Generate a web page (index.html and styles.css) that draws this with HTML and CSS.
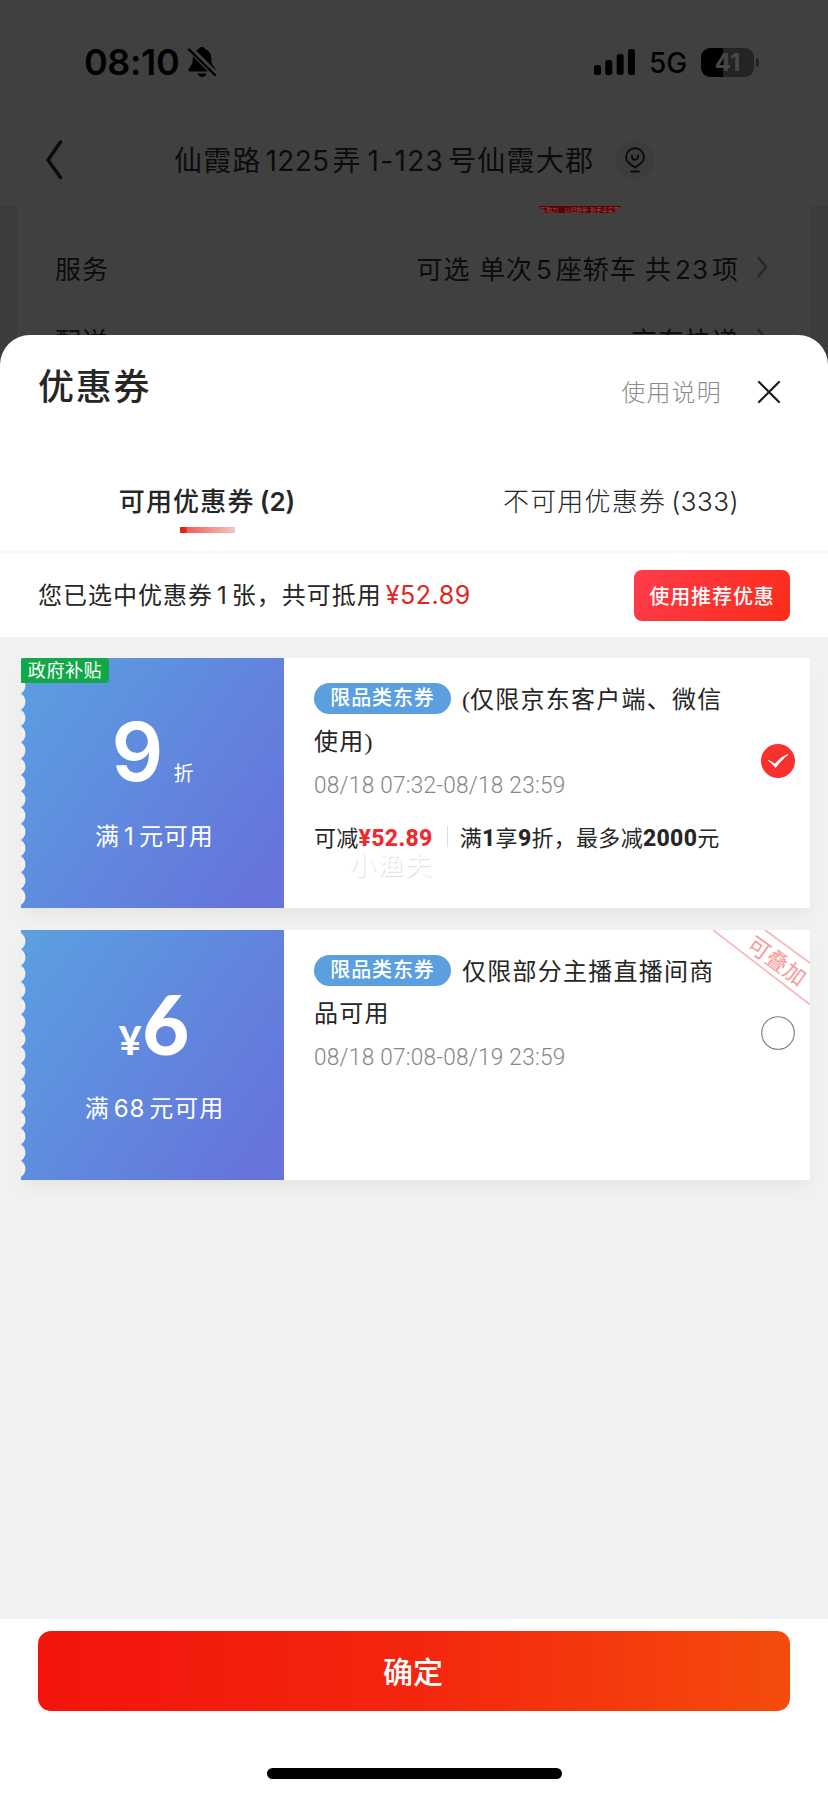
FILE: index.html
```html
<!DOCTYPE html>
<html lang="zh-CN">
<head>
<meta charset="utf-8">
<title>优惠券</title>
<link rel="stylesheet" href="styles.css">
</head>
<body>
<div class="screen">
  <div class="page">
    <header class="status">
      <span class="time">08:10</span>
      <svg class="bell" width="30" height="32" viewBox="0 0 30 32"><path d="M15 1c-1.700 0-2.900.9-3.300 2.300C7.500 4.800 5.900 8 5.800 12.500c-.1 4.500-.9 6.500-3.300 8.900C1 23 1 25.500 4 25.500h22c3 0 3-2.500 1.500-4.100-2.400-2.400-3.200-4.400-3.300-8.900-.1-4.500-1.700-7.700-5.900-9.200C17.900 1.900 16.700 1 15 1zM10.500 27.500h9c-.6 2.200-2.300 3.500-4.500 3.500s-3.900-1.300-4.500-3.500z"/><path d="M1 1l28 28" stroke="#404040" stroke-width="6.500"/><path d="M2 3.500L28 29" stroke="#000" stroke-width="2.400" stroke-linecap="round"/></svg>
      <svg class="signal" width="42" height="26" viewBox="0 0 42 26"><rect y="16" width="7" height="10" rx="2.500"/><rect x="11.300" y="11" width="7" height="15" rx="2.500"/><rect x="22.700" y="5" width="7" height="21" rx="2.500"/><rect x="34" width="7" height="26" rx="2.500"/></svg>
      <span class="net">5G</span>
      <span class="battery"><span class="level">41</span></span>
      <span class="nub"></span>
    </header>
    <nav class="nav">
      <svg class="back" width="18" height="42" viewBox="0 0 18 42"><path d="M15.500 3L3 21l12.500 17.500" fill="none" stroke="#0b0b0b" stroke-width="3.400" stroke-linecap="round" stroke-linejoin="round"/></svg>
      <h1 class="address">仙霞路<span class="n">1225</span>弄<span class="n wide">1-123</span>号仙霞大郡</h1>
      <span class="pin"><svg width="22" height="27" viewBox="0 0 22 27"><g fill="none" stroke="#0c0c0c" stroke-width="1.900" stroke-linecap="round"><path d="M11 20.500C8.500 18.300 2 16 2 10.200a9 9 0 0 1 18 0C20 16 13.500 18.300 11 20.500z"/><path d="M8 8.500v1.300a3 3 0 0 0 6 0V8.500M7 24.500h8"/></g></svg></span>
    </nav>
    <main class="order">
      <div class="promo">东助力　以旧换新 到手享实惠</div>
      <div class="row"><span>服务</span><span class="value">可选 单次<span class="n">5</span>座轿车 共<span class="n">23</span>项</span><svg class="arrow" width="12" height="24" viewBox="0 0 12 24"><path d="M2 2l8 10-8 10" fill="none" stroke="#282828" stroke-width="2.400"/></svg></div>
      <div class="row"><span>配送</span><span class="value">京东快递</span><svg class="arrow" width="12" height="24" viewBox="0 0 12 24"><path d="M2 2l8 10-8 10" fill="none" stroke="#282828" stroke-width="2.400"/></svg></div>
    </main>
  </div>

  <section class="sheet">
    <header class="sheet-head">
      <h2>优惠券</h2>
      <a class="help">使用说明</a>
      <svg width="24" height="24" viewBox="0 0 24 24"><path d="M2 2l20 20M22 2L2 22" stroke="#1c1c1c" stroke-width="2.200" stroke-linecap="round"/></svg>
    </header>
    <div class="tabs">
      <div class="tab active"><span>可用优惠券<span class="count">(2)</span></span></div>
      <div class="tab"><span>不可用优惠券<span class="count">(333)</span></span></div>
    </div>
    <div class="summary">
      <p>您已选中优惠券<span class="one">1</span>张，共可抵用<span class="amount">¥52.89</span></p>
      <button class="recommend">使用推荐优惠</button>
    </div>
    <div class="list">
      <article class="coupon">
        <div class="stub">
          <span class="tag">政府补贴</span>
          <div class="price"><span class="nine">9</span><span class="unit">折</span></div>
          <div class="cond">满<span class="n">1</span>元可用</div>
        </div>
        <div class="info">
          <h3><span class="badge">限品类东券</span><span class="paren">(</span>仅限京东客户端、微信使用<span class="paren">)</span></h3>
          <time>08/18 07:32-08/18 23:59</time>
          <div class="detail"><span>可减<b class="red">¥52.89</b></span><i></i><span>满<b>1</b>享<b>9</b>折，最多减<b>2000</b>元</span></div>
          <span class="watermark">小渔夫</span>
        </div>
        <svg class="check" width="34" height="34" viewBox="0 0 34 34"><circle cx="17" cy="17" r="17" fill="#f8302e"/><path d="M7.500 16.500c2 .8 4.500 2.300 6.500 3.800 3.500-4.500 8-8.300 13-9.800-4.500 3.500-9 8.200-12.500 13-1.500-2.500-4.500-5-7-7z" fill="#fff" stroke="#fff" stroke-width="1" stroke-linejoin="round"/></svg>
      </article>
      <article class="coupon">
        <div class="stub">
          <div class="price"><span class="yen">¥</span><span class="six">6</span></div>
          <div class="cond">满<span class="n">68</span>元可用</div>
        </div>
        <div class="info">
          <h3><span class="badge">限品类东券</span>仅限部分主播直播间商品可用</h3>
          <time>08/18 07:08-08/19 23:59</time>
        </div>
        <svg class="check" width="34" height="34" viewBox="0 0 34 34"><circle cx="17" cy="17" r="16.300" fill="#fff" stroke="#777" stroke-width="1.100"/></svg>
        <div class="ribbon"><svg width="104" height="76" viewBox="0 0 104 76"><path d="M7 0l97 74.500M59 0l45 33" stroke="#f8b4b4" stroke-width="1.600"/></svg><span>可叠加</span></div>
      </article>
    </div>
    <footer class="foot">
      <button class="confirm">确定</button>
      <div class="home"></div>
    </footer>
  </section>
</div>
</body>
</html>
```

FILE: styles.css
```css
* { box-sizing: border-box; margin: 0; }
body { font-family: Inter, "Noto Sans CJK SC", sans-serif; background: #404040; color: #262626; }
button { border: 0; font-family: inherit; padding: 0; color: #fff; font-weight: 500; }
svg { display: block; flex: none; }
.screen { width: 828px; height: 1796px; overflow: hidden; display: flex; flex-direction: column; }

.page { height: 366px; flex: none; background: #404040; color: #0c0c0c; overflow: hidden; }
.status { height: 124px; padding: 0 69px 0 84px; display: flex; align-items: center; color: #000; }
.time { font-size: 36px; font-weight: 600; line-height: 36px; width: 103px; letter-spacing: -.4px; white-space: nowrap; }
.signal { margin: 0 13px 0 auto; }
.net { font-size: 28px; font-weight: 500; width: 40px; line-height: 28px; padding-top: 2px; margin-right: 12px; }
.battery { width: 53px; height: 29px; border-radius: 9px; background: linear-gradient(90deg, #000 22px, #242424 22px); display: flex; align-items: center; justify-content: center; }
.level { color: #484848; font-size: 24px; font-weight: 700; line-height: 28px; padding-top: 2px; }
.nub { width: 3px; height: 9px; margin-left: 2px; border-radius: 0 4px 4px 0; background: #242424; }
.nav { height: 82px; display: flex; align-items: center; padding: 0 0 10px 45px; }
.address { font-size: 28px; font-weight: 400; line-height: 40px; letter-spacing: 1.2px; white-space: nowrap; margin-left: 111px; width: 442px; padding-top: 2px; }
.address .n { margin: 0 3px 0 4px; letter-spacing: .3px; }
.address .wide { margin: 0 4px 0 6px; letter-spacing: 1.3px; }
.pin { width: 38px; height: 38px; border-radius: 50%; background: #3c3c3c; display: flex; align-items: center; justify-content: center; }
.order { margin: 0 17px; height: 160px; background: #404040; box-shadow: -17px 0 #3c3c3c, 17px 0 #3c3c3c; }
.promo { width: 82px; height: 7px; margin-left: 522px; overflow: hidden; background: #5c0205; clip-path: polygon(0 0, 100% 0, 92% 100%, 8% 100%); color: #8b5656; font-size: 6px; line-height: 7px; text-align: center; white-space: nowrap; }
.row { height: 72px; padding: 0 43px 0 38px; display: flex; align-items: center; font-size: 26px; letter-spacing: 1px; }
.promo + .row { margin-top: 18px; }
.value { margin-left: auto; }
.value .n { margin: 0 3px; }
.arrow { margin-left: 17px; }

.sheet { margin-top: -31px; flex: 1; border-radius: 30px 30px 0 0; background: #fff; display: flex; flex-direction: column; position: relative; overflow: hidden; }
.sheet-head { height: 113px; padding: 0 47px 0 38px; display: flex; align-items: center; }
h2 { font-size: 36px; font-weight: 500; letter-spacing: 1.8px; line-height: 40px; margin: -9px auto 0 0; }
.help { color: #8c8c8c; font-size: 24px; font-weight: 300; letter-spacing: 1.2px; margin: -2px 35px 0 0; }
.tabs { height: 105px; padding-top: 34px; display: flex; border-bottom: 2px solid #f7f7f7; }
.tab { flex: 1; display: flex; flex-direction: column; align-items: center; font-size: 26px; line-height: 40px; letter-spacing: 1.2px; font-weight: 300; }
.tab:not(.active) .count { letter-spacing: .5px; }
.tab.active { font-weight: 500; }
.tab.active::after { content: ""; width: 55px; height: 6px; margin-top: 5px; background: linear-gradient(90deg, #e2231a 6px, #ec6058 7px, #f7c4c0); }
.count { margin-left: 5px; letter-spacing: 0; }
.active .count { font-weight: 600; }
.summary { height: 84px; padding: 0 38px; display: flex; align-items: center; justify-content: space-between; font-size: 24px; letter-spacing: 1px; }
.summary p { margin-top: -3px; }
.summary .one { margin: 0 4px 0 4px; }
.amount { color: #e1251b; margin-left: 4px; font-size: 25px; letter-spacing: .55px; }
.recommend { width: 156px; height: 51px; border-radius: 8px; background: linear-gradient(120deg, #ff3b4d, #fa2c19); font-size: 20px; letter-spacing: .9px; }
.list { flex: 1; background: #f1f1f1; padding: 21px 18px 0 21px; display: flex; flex-direction: column; gap: 22px; }
.coupon { height: 250px; background: #fff; display: flex; align-items: center; position: relative; box-shadow: 0 10px 14px -3px rgba(0, 0, 0, .05); }
.stub { position: relative; width: 263px; height: 250px; flex: none; background: linear-gradient(125deg, #5ba0e0, #608ade 45%, #6674dc 90%); color: #fff; display: flex; flex-direction: column; align-items: center; padding-top: 54px; }
.stub::before { content: ""; position: absolute; left: 0; top: 3px; width: 6px; height: 244px; background: radial-gradient(circle at -5px 50%, #f1f1f1 9px, rgba(241, 241, 241, 0) 9.800px) 0 0 / 6px 16.270px; }
.tag { position: absolute; left: 0; top: 0; width: 88px; height: 25px; border-radius: 4px 4px 4px 0; background: #12a84a; font-size: 18px; letter-spacing: .6px; line-height: 25px; text-align: center; }
.price { display: flex; align-items: baseline; height: 96px; line-height: 80px; }
.nine { font-size: 81px; font-weight: 600; }
.unit { font-size: 20px; margin-left: 10px; }
.yen { font: 900 39px Lato, sans-serif; margin-right: 1px; }
.six { font: 900 81px/80px Lato, sans-serif; margin-right: -3px; }
.cond { font-size: 24px; line-height: 58px; letter-spacing: 1px; padding-left: 4px; }
.cond .n { margin: 0 4px; }
.info { flex: 1; height: 250px; padding: 21px 0 0 30px; position: relative; }
h3 { width: 415px; font-size: 24px; font-weight: 400; line-height: 42px; letter-spacing: 1.25px; }
.badge { display: inline-block; vertical-align: 3px; width: 137px; height: 31px; margin: -2px 11px 0 0; border-radius: 16px; background: #5b9fdf; color: #fff; font-size: 20px; font-weight: 500; line-height: 31px; text-align: center; letter-spacing: .9px; }
.paren { font-family: "Liberation Serif", serif; letter-spacing: 0; }
time { display: block; width: 280px; font: 300 24px/44px Roboto, sans-serif; color: #858585; letter-spacing: .3px; transform: scaleX(.94); transform-origin: 0 50%; }
.detail { display: flex; align-items: center; margin-top: 8px; height: 42px; font-size: 22px; letter-spacing: .3px; white-space: nowrap; }
.detail i { width: 1px; height: 21px; background: #ddd; margin: 0 12px 0 14px; }
.detail b { font: 800 23px Roboto, sans-serif; }
.detail .red { color: #f02a2e; }
.watermark { position: absolute; left: 66px; top: 188px; font-size: 26px; line-height: 40px; color: #fff; text-shadow: 1px 1px 1px #ddd; letter-spacing: 1.6px; }
.check { margin-right: 15px; margin-top: -44px; }
.ribbon { position: absolute; right: 0; top: 0; width: 104px; height: 76px; overflow: hidden; }
.ribbon span { position: absolute; left: 36px; top: 16px; width: 70px; text-align: center; font-size: 22px; line-height: 30px; color: #f79b9b; transform: rotate(36deg); }
.foot { height: 177px; flex: none; padding: 12px 38px 0; display: flex; flex-direction: column; align-items: center; }
.confirm { width: 752px; height: 80px; border-radius: 13px; background: linear-gradient(90deg, #f2140c, #f4260e 50%, #f44c0c); font-size: 30px; padding: 0 2px 3px 0; }
.home { width: 295px; height: 11px; border-radius: 6px; background: #000; margin-top: 57px; }
```
